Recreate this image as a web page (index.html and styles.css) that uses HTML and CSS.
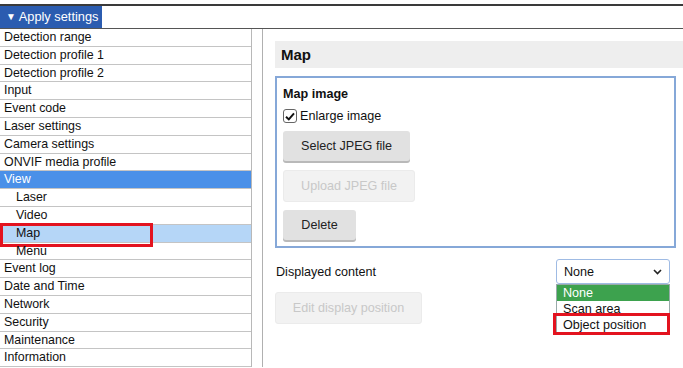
FILE: index.html
```html
<!DOCTYPE html>
<html lang="en">
<head>
    <meta charset="UTF-8">
    <title>Map settings</title>
    <link rel="stylesheet" href="styles.css">
</head>
<body>

<div class="tabbar">
    <div class="tab"><span class="arrow">&#9660;</span> Apply settings</div>
</div>

<div class="main">
    <ul class="nav">
        <li>Detection range</li>
        <li>Detection profile 1</li>
        <li>Detection profile 2</li>
        <li>Input</li>
        <li>Event code</li>
        <li>Laser settings</li>
        <li>Camera settings</li>
        <li>ONVIF media profile</li>
        <li class="open">View</li>
        <li class="sub">Laser</li>
        <li class="sub">Video</li>
        <li class="sub current">Map<span class="mark mark-map"></span></li>
        <li class="sub">Menu</li>
        <li>Event log</li>
        <li>Date and Time</li>
        <li>Network</li>
        <li>Security</li>
        <li>Maintenance</li>
        <li>Information</li>
    </ul>

    <div class="content">
        <h2 class="page-title">Map</h2>

        <div class="group">
            <h3>Map image</h3>
            <label class="check">
                <span class="box">
                    <svg width="10" height="9" viewBox="0 0 10 9"><path d="M1 4.8 L3.8 7.4 L9 1.4" fill="none" stroke="#111" stroke-width="2"/></svg>
                </span>
                Enlarge image
            </label>
            <button class="btn btn-select">Select JPEG file</button>
            <button class="btn btn-upload" disabled>Upload JPEG file</button>
            <button class="btn btn-delete">Delete</button>
        </div>

        <div class="display-row">
            <span class="label">Displayed content</span>
            <div class="select-wrap">
                <div class="select">
                    None
                    <svg width="9" height="6" viewBox="0 0 9 6"><path d="M1 1 L4.5 4.5 L8 1" fill="none" stroke="#222" stroke-width="1.6"/></svg>
                </div>
                <ul class="options">
                    <li class="selected">None</li>
                    <li>Scan area</li>
                    <li>Object position<span class="mark mark-option"></span></li>
                </ul>
            </div>
        </div>

        <button class="btn btn-edit" disabled>Edit display position</button>
    </div>
</div>

</body>
</html>
```

FILE: styles.css
```css
body {
    margin: 0;
    padding: 0;
    font-family: "Liberation Sans", Arial, sans-serif;
    font-size: 12.2px;
    color: #111;
    background-color: #fff;
    overflow: hidden;
}

.tabbar {
    margin-top: 4px;
    border-top: 2px solid #3a3a3a;
    border-bottom: 1px solid #555;
    height: 22px;
}

.tab {
    display: inline-block;
    height: 22px;
    line-height: 22px;
    padding: 0 4px 0 6px;
    background-color: #2b5cb0;
    color: #fff;
    font-size: 12.8px;
    white-space: nowrap;
}

.tab .arrow {
    font-size: 10px;
    vertical-align: 1px;
}

.main {
    display: flex;
}

.nav {
    list-style: none;
    margin: 0;
    padding: 0;
    width: 251px;
    border-right: 1px solid #b8b8b8;
}

.nav li {
    position: relative;
    box-sizing: border-box;
    height: 17.8px;
    line-height: 17.6px;
    padding-left: 4px;
    border-bottom: 1px solid #c4c4c4;
    font-size: 12.4px;
}

.nav li.sub {
    padding-left: 16px;
}

.nav li.open {
    background-color: #4a90e8;
    color: #fff;
}

.nav li.current {
    background-color: #b5d6f7;
}

.mark {
    position: absolute;
    border: 3px solid #e3131f;
}

.mark-map {
    left: 0;
    top: -2px;
    width: 147px;
    height: 18px;
}

.content {
    flex: 1;
    margin-left: 10px;
    border-left: 1px solid #b0b0b0;
    padding: 12px 0 0 12px;
}

.page-title {
    margin: 0;
    height: 27px;
    line-height: 27px;
    padding-left: 6px;
    background-color: #eeeeee;
    font-size: 15px;
}

.group {
    margin-top: 8px;
    width: 391px;
    height: 168px;
    border: 2px solid #86a8d8;
    padding: 0 0 0 6px;
}

.group h3 {
    margin: 8px 0 0 0;
    font-size: 12.6px;
    line-height: 17px;
}

.check {
    display: flex;
    align-items: center;
    gap: 3px;
    margin-top: 5px;
    height: 16px;
    font-size: 12.6px;
}

.box {
    display: flex;
    align-items: center;
    justify-content: center;
    box-sizing: border-box;
    width: 14px;
    height: 14px;
    border: 1px solid #666;
    border-radius: 3px;
}

.btn {
    display: block;
    box-sizing: border-box;
    font-family: "Liberation Sans", Arial, sans-serif;
    font-size: 12.6px;
    color: #222;
    border: none;
    border-radius: 3px;
    background-color: #e1e1e1;
    box-shadow: 0 2px 0 #b9b9b9;
    padding: 0;
}

.btn:disabled {
    background-color: #f2f2f2;
    color: #c8c8c8;
    box-shadow: none;
    border: 1px solid #ebebeb;
}

.btn-select {
    margin-top: 7px;
    width: 127px;
    height: 30px;
}

.btn-upload {
    margin-top: 9px;
    width: 132px;
    height: 32px;
}

.btn-delete {
    margin-top: 8px;
    width: 73px;
    height: 30px;
}

.display-row {
    display: flex;
    align-items: center;
    justify-content: space-between;
    width: 395px;
    margin-top: 11px;
}

.label {
    font-size: 12.6px;
    padding-left: 1px;
}

.select-wrap {
    position: relative;
}

.select {
    display: flex;
    align-items: center;
    justify-content: space-between;
    box-sizing: border-box;
    width: 114px;
    height: 25px;
    padding: 0 7px 0 7px;
    border: 1px solid #9fbbe4;
    border-radius: 3px;
    font-size: 12.6px;
}

.options {
    position: absolute;
    top: 25px;
    left: 0;
    width: 112px;
    margin: 0;
    padding: 0;
    list-style: none;
    background-color: #fff;
    border: 1px solid #9aa;
    font-size: 12.6px;
}

.options li {
    position: relative;
    height: 16px;
    line-height: 16px;
    padding-left: 6px;
}

.options li.selected {
    background-color: #3da24e;
    color: #fff;
}

.mark-option {
    left: -4px;
    top: -4px;
    width: 111px;
    height: 16px;
}

.btn-edit {
    margin-top: 8px;
    width: 147px;
    height: 32px;
}
```
